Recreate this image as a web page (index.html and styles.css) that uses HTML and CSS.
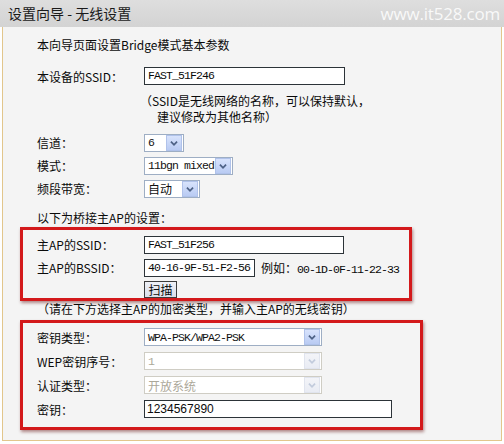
FILE: index.html
```html
<!DOCTYPE html>
<html lang="zh">
<head>
<meta charset="utf-8">
<title>设置向导 - 无线设置</title>
<link rel="stylesheet" href="styles.css">
</head>
<body>
<div class="header">
  <span class="title">设置向导 - 无线设置</span>
  <span class="wm">www.it528.com</span>
</div>
<div class="panel">
  <p class="intro">本向导页面设置Bridge模式基本参数</p>
  <div class="row r18">
    <span class="lbl">本设备的SSID：</span>
    <span class="inp w201">FAST_51F246</span>
  </div>
  <p class="hint">（SSID是无线网络的名称，可以保持默认，</p>
  <p class="hint hint2">建议修改为其他名称）</p>
  <div class="selrows">
    <div class="row r23">
      <span class="lbl">信道：</span>
      <span class="sel w40"><span class="val">6</span><span class="arr"><svg viewBox="0 0 16 16" width="16" height="16"><path d="M4.5 6.5 L8 10 L11.5 6.5" fill="none" stroke="#4d6185" stroke-width="2"/></svg></span></span>
    </div>
    <div class="row r23">
      <span class="lbl">模式：</span>
      <span class="sel w89"><span class="val">11bgn mixed</span><span class="arr"><svg viewBox="0 0 16 16" width="16" height="16"><path d="M4.5 6.5 L8 10 L11.5 6.5" fill="none" stroke="#4d6185" stroke-width="2"/></svg></span></span>
    </div>
    <div class="row r23">
      <span class="lbl">频段带宽：</span>
      <span class="sel w56"><span class="val cjk">自动</span><span class="arr"><svg viewBox="0 0 16 16" width="16" height="16"><path d="M4.5 6.5 L8 10 L11.5 6.5" fill="none" stroke="#4d6185" stroke-width="2"/></svg></span></span>
    </div>
  </div>
  <p class="sec">以下为桥接主AP的设置：</p>
  <div class="box box1">
    <div class="row r23">
      <span class="lbl">主AP的SSID：</span>
      <span class="inp w200">FAST_51F256</span>
    </div>
    <div class="row r23">
      <span class="lbl">主AP的BSSID：</span>
      <span class="inp w111">40-16-9F-51-F2-56</span>
      <span class="example">例如：<span class="mono">00-1D-0F-11-22-33</span></span>
    </div>
    <div class="btnrow">
      <span class="btn">扫描</span>
    </div>
  </div>
  <p class="sec2">（请在下方选择主AP的加密类型，并输入主AP的无线密钥）</p>
  <div class="box box2">
    <div class="row r24">
      <span class="lbl">密钥类型：</span>
      <span class="sel w178"><span class="val">WPA-PSK/WPA2-PSK</span><span class="arr"><svg viewBox="0 0 16 16" width="16" height="16"><path d="M4.5 6.5 L8 10 L11.5 6.5" fill="none" stroke="#4d6185" stroke-width="2"/></svg></span></span>
    </div>
    <div class="row r24">
      <span class="lbl">WEP密钥序号：</span>
      <span class="sel w178 dis"><span class="val">1</span><span class="arr"><svg viewBox="0 0 16 16" width="16" height="16"><path d="M4.5 6.5 L8 10 L11.5 6.5" fill="none" stroke="#c2cbdc" stroke-width="2"/></svg></span></span>
    </div>
    <div class="row r24">
      <span class="lbl">认证类型：</span>
      <span class="sel w178 dis"><span class="val cjk">开放系统</span><span class="arr"><svg viewBox="0 0 16 16" width="16" height="16"><path d="M4.5 6.5 L8 10 L11.5 6.5" fill="none" stroke="#c2cbdc" stroke-width="2"/></svg></span></span>
    </div>
    <div class="row r24">
      <span class="lbl">密钥：</span>
      <span class="inp w248 pw">1234567890</span>
    </div>
  </div>
</div>
</body>
</html>
```
FILE: styles.css
```css
* { box-sizing: border-box; }
html, body {
  margin: 0;
  padding: 0;
}
body {
  width: 504px;
  height: 444px;
  overflow: hidden;
  background: #ffffff;
  font-family: "Noto Sans CJK SC", sans-serif;
  font-size: 12px;
  color: #0a0a0a;
}
p { margin: 0; }

.header {
  height: 27px;
  background: linear-gradient(#dedede, #d3d3d3);
  display: flex;
  align-items: center;
  justify-content: space-between;
  padding: 0 4px 0 8px;
}
.title {
  font-size: 14px;
  color: #1a1a1a;
  line-height: 27px;
}
.wm {
  font-family: "Open Sans", sans-serif;
  font-size: 17px;
  color: rgba(255, 255, 255, 0.85);
  letter-spacing: -0.2px;
}

.panel {
  margin-left: 2px;
  width: 500px;
  height: 414px;
  border: 1px solid #e2c68c;
  border-top: none;
  background: #f4f4f4;
  padding: 9px 0 0 34px;
}

.intro { line-height: 18px; }

.row {
  display: flex;
  align-items: center;
}
.r18 { height: 18px; margin-top: 13px; }
.r23 { height: 23px; }
.r24 { height: 24px; }
.lbl {
  width: 107px;
  flex: none;
}

.hint {
  line-height: 16px;
  margin-left: 103px;
  margin-top: 8px;
}
.hint2 { margin-left: 120px; margin-top: 0; }

.selrows { margin-top: 6px; }

.inp {
  height: 18px;
  border: 1px solid #2c3338;
  background: #fff;
  font-family: "Liberation Mono", monospace;
  font-size: 11.5px;
  letter-spacing: -0.9px;
  line-height: 16px;
  padding-left: 3px;
  white-space: nowrap;
  overflow: hidden;
}
.w201 { width: 201px; }
.w200 { width: 200px; }
.w111 { width: 111px; }
.w248 { width: 248px; }
.pw { font-family: "Liberation Sans", sans-serif; font-size: 12px; letter-spacing: 0; padding-left: 2px; }

.sel {
  height: 18px;
  border: 1px solid #9eaec4;
  background: #fff;
  display: flex;
  align-items: center;
  justify-content: space-between;
  padding: 1px;
}
.sel .val {
  font-family: "Liberation Mono", monospace;
  font-size: 11.5px;
  letter-spacing: -0.9px;
  padding-left: 2px;
  white-space: nowrap;
  color: #111;
}
.sel .val.cjk {
  font-family: "Noto Sans CJK SC", sans-serif;
  font-size: 12px;
  letter-spacing: 0;
}
.sel .arr {
  width: 16px;
  height: 16px;
  flex: none;
  background: linear-gradient(#d8e3fc, #b9cbf3);
  border: 1px solid #b0c2ea;
  display: flex;
  align-items: center;
  justify-content: center;
}
.sel .arr svg { width: 14px; height: 14px; }
.w40 { width: 40px; }
.w89 { width: 89px; }
.w56 { width: 56px; }
.w178 { width: 178px; }
.sel.dis { border-color: #cfcdc4; }
.sel.dis .val { color: #aca899; }
.sel.dis .arr {
  background: linear-gradient(#f3f4f8, #e9ecf4);
  border-color: #e0e4ee;
}

.sec {
  line-height: 16px;
  margin-top: 10px;
}
.sec2 {
  line-height: 16px;
  margin-top: 0;
}

.box {
  margin-left: -17px;
  border: 3px solid #d3191b;
  box-shadow: 1px 2px 3px rgba(90, 0, 0, 0.45);
  padding-left: 14px;
}
.box1 {
  width: 392px;
  height: 74px;
  margin-top: 1px;
  padding-top: 3px;
}
.box2 {
  width: 403px;
  margin-top: 3px;
  padding-top: 2px;
  padding-bottom: 6px;
}

.example {
  margin-left: 6px;
  white-space: nowrap;
}
.mono {
  font-family: "Liberation Mono", monospace;
  font-size: 11.5px;
  letter-spacing: -0.9px;
}

.btnrow {
  padding-left: 107px;
  margin-top: 2px;
  height: 17px;
}
.btn {
  display: block;
  width: 33px;
  height: 17px;
  border: 1px solid #3c3c3c;
  background: linear-gradient(#eef0f6, #dadfea);
  font-size: 12px;
  line-height: 15px;
  text-align: center;
}
```
